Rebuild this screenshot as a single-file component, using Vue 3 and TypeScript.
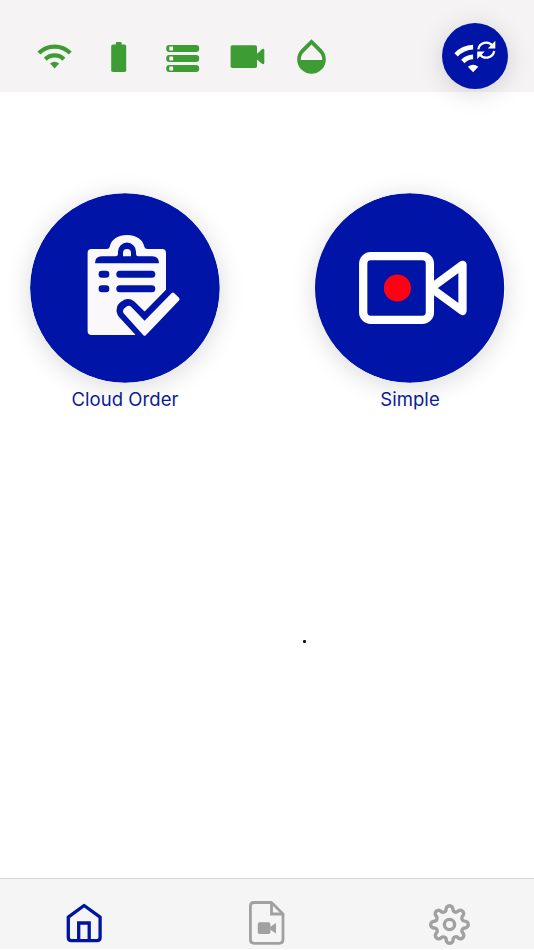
<script setup lang="ts">
import { ref } from 'vue'

type Tab = 'home' | 'files' | 'settings'
const active = ref<Tab>('home')
</script>

<template>
  <div class="screen">
    <header class="topbar">
      <div class="statuses">
        <svg class="status" viewBox="33 35 43 43" fill="none" stroke="#3e9c35" stroke-width="4.2">
          <path d="M38.9 53.1A22.4 22.4 0 0 1 70.3 53.1" />
          <path d="M45.3 59.3A13.2 13.2 0 0 1 63.9 59.3" />
          <path d="M50 63.6Q54.6 60 59.2 63.6L54.6 68.5Z" fill="#3e9c35" stroke="none" />
        </svg>
        <svg class="status" viewBox="97.5 35 43 43" fill="#3e9c35">
          <rect x="111.7" y="44.6" width="15" height="27.4" rx="1.8" />
          <rect x="116.3" y="42" width="5.8" height="5" rx="1" />
        </svg>
        <svg class="status" viewBox="162 35 43 43">
          <g fill="#3e9c35">
            <rect x="166.2" y="45" width="33" height="7" rx="3.2" />
            <rect x="166.2" y="55" width="33" height="7" rx="3.2" />
            <rect x="166.2" y="65" width="33" height="7" rx="3.2" />
          </g>
          <g fill="#f5f3f4">
            <rect x="169.3" y="46.6" width="3.8" height="3.8" rx=".4" />
            <rect x="169.3" y="56.6" width="3.8" height="3.8" rx=".4" />
            <rect x="169.3" y="66.6" width="3.8" height="3.8" rx=".4" />
          </g>
        </svg>
        <svg class="status" viewBox="226 35 43 43" fill="#3e9c35">
          <rect x="230.6" y="45.3" width="26.4" height="22.7" rx="1.8" />
          <path d="M256 54.7L262 49.3Q264.3 48 264.3 50V62.8Q264.3 65 262 63.7L256 58.7Z" />
        </svg>
        <svg class="status" viewBox="0 0 24 24" fill="#3e9c35">
          <path d="M17.66 8L12 2.35 6.34 8C4.78 9.56 4 11.64 4 13.64s.78 4.11 2.34 5.67 3.61 2.35 5.66 2.35 4.1-.79 5.66-2.35S20 15.64 20 13.64 19.22 9.56 17.66 8zM6 14c.01-2 .62-3.27 1.76-4.4L12 5.27l4.24 4.38C17.38 10.77 17.99 12 18 14H6z" />
        </svg>
      </div>
      <button class="sync" aria-label="Refresh connection">
        <svg viewBox="442.4 22.8 66 66" fill="none" stroke="#fff">
          <g stroke-width="4.7">
            <path d="M456.5 54.7Q463.5 47.3 473.5 47" />
            <path d="M463.2 61.3Q467.5 57 473.5 56.7" />
          </g>
          <path d="M468.3 66.6Q473.5 62.6 478.7 66.6L473.5 72Z" fill="#fff" stroke="none" />
          <g stroke-width="2.2">
            <path d="M478.7 49.2A8 8 0 0 1 493 45.7" />
            <path d="M494.6 50.8A8 8 0 0 1 480.5 54.5" />
          </g>
          <path d="M495.7 40.6V48.2H488.2ZM477.6 51.2H485.1L477.6 58.8Z" fill="#fff" stroke="none" />
        </svg>
      </button>
    </header>

    <main class="content">
      <div class="actions">
        <button class="action">
          <svg class="disc" viewBox="29.7 193 190 190">
            <circle cx="124.6" cy="288" r="94.8" fill="#0014a8" />
            <path fill="#fbf8fb" d="M91.3 249H106Q109 249 109.5 246.5C111 239 118 234.9 126.7 234.9S142.5 239 144 246.5Q144.5 249 147.5 249H161.7Q165.7 249 165.7 253V290L135 335H91.3Q87.3 335 87.3 331V253Q87.3 249 91.3 249Z" />
            <path fill="#0014a8" fill-rule="evenodd" d="M94.7 263.3Q94.7 256.2 101.5 256.2H115.5Q117.7 256.2 117.7 253.5V251.5A9 9 0 0 1 135.7 251.5V253.5Q135.7 256.2 138 256.2H152Q158.7 256.2 158.7 263.3ZM122.7 256.3V253Q122.7 249 126.7 249T130.7 253V256.3Z" />
            <g fill="#0014a8">
              <rect x="98.3" y="270.7" width="10.7" height="7" rx="3.2" />
              <rect x="116" y="270.7" width="39" height="7" rx="3.5" />
              <rect x="98.3" y="285.2" width="10.7" height="7" rx="3.2" />
              <rect x="116" y="285.2" width="39" height="7" rx="3.5" />
            </g>
            <path class="tick-gap" d="M123.3 312.3L144.3 335L179.3 299L172.3 292.2L144.3 320.7L129.5 306.2Q127.5 304.5 125.5 306.5Q121.5 308 123.3 312.3Z" />
            <path fill="#fbf8fb" d="M123.3 313.3Q121.6 311.2 123.4 309L126.3 306.4Q129 304.8 131 307L144.3 320.7L171.2 293.2Q172.6 292 174 293.2L178.7 297.8Q180 299.2 178.7 300.6L145.5 335.2Q144.3 336.2 143.1 335.2Z" />
          </svg>
          <span class="label">Cloud Order</span>
        </button>
        <button class="action">
          <svg class="disc" viewBox="315 193 190 190" fill="none" stroke="#fff" stroke-width="8.3" stroke-linejoin="round">
            <circle cx="409.4" cy="288" r="94.8" fill="#0014a8" stroke="none" />
            <rect x="363.2" y="256.2" width="66.7" height="63.6" rx="7.5" />
            <path d="M431 288L462.5 264.8V311Z" />
            <circle cx="397.4" cy="288" r="13.6" fill="#ff0015" stroke="none" />
          </svg>
          <span class="label">Simple</span>
        </button>
      </div>
      <span class="speck"></span>
    </main>

    <nav class="tabs">
      <button class="tab" :class="{ active: active === 'home' }" aria-label="Home" @click="active = 'home'">
        <svg viewBox="60 900 48 48" fill="none" stroke="currentColor" stroke-width="3.3" stroke-linejoin="round">
          <path d="M68.3 917.2L84.1 905.5L100.1 917.2V937.6Q100.1 940.7 97 940.7H71.4Q68.3 940.7 68.3 937.6Z" />
          <path d="M78.7 940V923H89.2V940" stroke-linejoin="miter" />
        </svg>
      </button>
      <button class="tab" :class="{ active: active === 'files' }" aria-label="Recordings" @click="active = 'files'">
        <svg viewBox="243 900 48 48" fill="none" stroke="currentColor" stroke-width="2.8" stroke-linejoin="round">
          <path d="M254 902.5H271.5L283 914V939.5Q283 943.3 279.2 943.3H254.2Q250.4 943.3 250.4 939.5V906.2Q250.4 902.5 254 902.5Z" />
          <path d="M271.5 902.5V914H283" stroke-linejoin="miter" />
          <g fill="currentColor" stroke="none">
            <rect x="257.8" y="922.2" width="12.6" height="11.8" rx="1.8" />
            <path d="M269.5 927.2L276 922.9V933.4L269.5 929.2Z" />
          </g>
        </svg>
      </button>
      <button class="tab" :class="{ active: active === 'settings' }" aria-label="Settings" @click="active = 'settings'">
        <svg class="gear" viewBox="0 0 24 24" fill="none" stroke="currentColor" stroke-width="2" stroke-linejoin="round">
          <circle cx="12" cy="12" r="3" />
          <path d="M19.4 15a1.65 1.65 0 0 0 .33 1.82l.06.06a2 2 0 0 1-2.83 2.83l-.06-.06a1.65 1.65 0 0 0-1.82-.33 1.65 1.65 0 0 0-1 1.51V21a2 2 0 0 1-4 0v-.09A1.65 1.65 0 0 0 9 19.4a1.65 1.65 0 0 0-1.82.33l-.06.06a2 2 0 0 1-2.83-2.83l.06-.06a1.65 1.65 0 0 0 .33-1.82 1.65 1.65 0 0 0-1.51-1H3a2 2 0 0 1 0-4h.09A1.65 1.65 0 0 0 4.6 9a1.65 1.65 0 0 0-.33-1.82l-.06-.06a2 2 0 0 1 2.83-2.83l.06.06a1.65 1.65 0 0 0 1.82.33H9a1.65 1.65 0 0 0 1-1.51V3a2 2 0 0 1 4 0v.09a1.65 1.65 0 0 0 1 1.51 1.65 1.65 0 0 0 1.82-.33l.06-.06a2 2 0 0 1 2.83 2.83l-.06.06a1.65 1.65 0 0 0-.33 1.82V9a1.65 1.65 0 0 0 1.51 1H21a2 2 0 0 1 0 4h-.09a1.65 1.65 0 0 0-1.51 1z" />
        </svg>
      </button>
    </nav>
  </div>
</template>

<style>
body {
  margin: 0;
  background: #fff;
}
</style>

<style scoped>
.screen {
  box-sizing: border-box;
  display: flex;
  flex-direction: column;
  height: 950px;
  padding-bottom: 1px;
  overflow: hidden;
  background: #fff;
  font-family: Inter, "Liberation Sans", sans-serif;
}
button {
  border: 0;
  padding: 0;
  background: none;
  font: inherit;
}
svg {
  display: block;
}
.topbar {
  box-sizing: border-box;
  display: flex;
  justify-content: space-between;
  align-items: flex-start;
  height: 92px;
  padding: 23px 26px 0 33px;
  background: #f5f3f4;
}
.statuses {
  display: flex;
  gap: 21.35px;
  padding-top: 12px;
}
.status {
  width: 43px;
  height: 43px;
}
.sync {
  width: 66px;
  height: 66px;
  border-radius: 50%;
  background: #0014a8;
  box-shadow: 0 4px 26px rgba(0, 0, 0, 0.15);
}
.sync svg {
  width: 66px;
  height: 66px;
}
.content {
  flex: 1;
  display: flex;
  flex-direction: column;
}
.actions {
  display: flex;
  justify-content: space-between;
  padding: 101px 29px 0 30px;
}
.action {
  display: flex;
  flex-direction: column;
  align-items: center;
  width: 190px;
}
.disc {
  width: 190px;
  height: 190px;
  border-radius: 50%;
  box-shadow: 0 4px 26px rgba(0, 0, 0, 0.15);
}
.tick-gap {
  fill: #0014a8;
  stroke: #0014a8;
  stroke-width: 13px;
  stroke-linejoin: round;
}
.label {
  margin-top: 4px;
  color: #0b1c96;
  font-size: 18.5px;
  line-height: 24px;
  letter-spacing: 0.05px;
  white-space: nowrap;
}
.speck {
  width: 3px;
  height: 3px;
  margin: 229px 0 0 302.5px;
  border-radius: 1px;
  background: #111;
}
.tabs {
  box-sizing: border-box;
  display: flex;
  justify-content: space-between;
  height: 71px;
  padding: 21px 61px 0 60px;
  border-top: 1px solid #d8d8d8;
  background: #f5f5f5;
}
.tab {
  display: flex;
  justify-content: center;
  width: 48px;
  height: 48px;
  color: #a1a1a1;
}
.tab.active {
  color: #0014a0;
}
.tab svg {
  width: 48px;
  height: 48px;
}
.tab .gear {
  width: 41px;
  height: 41px;
  margin-top: 3.7px;
}
</style>
